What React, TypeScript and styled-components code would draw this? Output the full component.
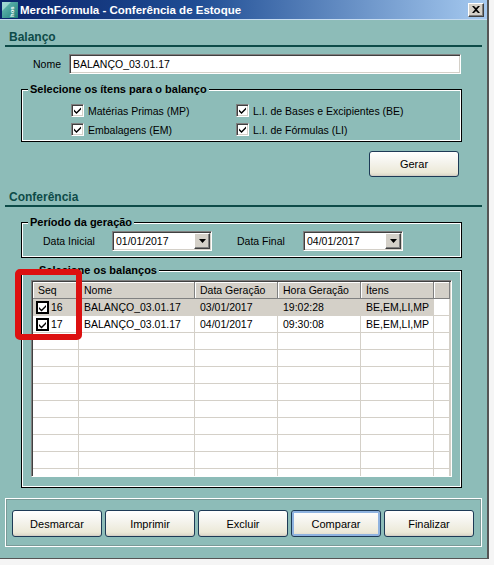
import React from 'react';
import styled, { createGlobalStyle } from 'styled-components';

const TEAL = '#8dbcb8';
const DARK_TEAL = '#0d4b48';

const GlobalStyle = createGlobalStyle`
  html, body { margin: 0; padding: 0; background: #f5f5f5; }
  body {
    font-family: "Liberation Sans", Arial, sans-serif;
    font-size: 10.5px;
    color: #000;
  }
  * { box-sizing: border-box; }
`;

const Window = styled.div`
  width: 489px;
  height: 559px;
  background: ${TEAL};
  border-right: 2px solid #555;
  border-bottom: 1px solid #555;
  display: flex;
  flex-direction: column;
`;

const TitleBar = styled.div`
  height: 20px;
  flex: none;
  display: flex;
  align-items: center;
  gap: 2px;
  padding: 0 3px 0 2px;
  background: linear-gradient(to right, #0a246a 0%, #1f4d94 40%, #a6caf0 100%);
  color: #fff;
  font-weight: bold;
  font-size: 11.5px;
  border-bottom: 1px solid #c6dcf0;
`;

const TitleText = styled.span`
  flex: 1;
  white-space: nowrap;
`;

const CloseButton = styled.span`
  width: 16px;
  height: 14px;
  background: #d4d0c8;
  border: 1px solid;
  border-color: #fff #404040 #404040 #fff;
  box-shadow: inset -1px -1px 0 #808080;
  display: flex;
  align-items: center;
  justify-content: center;
`;

const Body = styled.div`
  flex: 1;
  padding: 0 5px;
  display: flex;
  flex-direction: column;
`;

const SectionTitle = styled.div<{ $pt: number }>`
  padding: ${(p) => p.$pt}px 0 0 4px;
  line-height: 16px;
  font-size: 12px;
  font-weight: bold;
  color: ${DARK_TEAL};
  border-bottom: 2px solid ${DARK_TEAL};
`;

const NomeRow = styled.div`
  display: flex;
  align-items: center;
  margin-top: 7px;
  padding-left: 28px;
`;

const FieldLabel = styled.span<{ $w: number }>`
  width: ${(p) => p.$w}px;
  flex: none;
  white-space: nowrap;
`;

const Sunken = styled.div`
  background: #fff;
  border: 1px solid;
  border-color: #808080 #fff #fff #808080;
  box-shadow: inset 1px 1px 0 #404040, inset -1px -1px 0 #d4d0c8;
`;

const TextInput = styled(Sunken)`
  width: 392px;
  height: 20px;
  padding: 0 3px;
  line-height: 18px;
`;

const Group = styled.fieldset<{ $mt: number; $pad: string }>`
  margin: ${(p) => p.$mt}px 0 0 16px;
  width: 441px;
  min-width: 0;
  padding: ${(p) => p.$pad};
  border: 1px solid #000;
  box-shadow: inset 0 0 0 1px #fff;
`;

const Legend = styled.legend`
  margin-left: 6px;
  padding: 0 2px;
  line-height: 14px;
  font-size: 11px;
  font-weight: bold;
  background: ${TEAL};
`;

const CheckGrid = styled.div`
  display: grid;
  grid-template-columns: 165px 165px;
  grid-auto-rows: 19px;
  padding-left: 49px;
`;

const CheckItem = styled.label`
  display: flex;
  align-items: center;
  gap: 4px;
  white-space: nowrap;
`;

const CheckBox = styled(Sunken)`
  width: 13px;
  height: 13px;
  flex: none;
  display: flex;
  align-items: center;
  justify-content: center;
`;

const ButtonRow = styled.div`
  margin: 9px 0 0 16px;
  width: 441px;
  display: flex;
  justify-content: flex-end;
  padding-right: 3px;
`;

const Button = styled.div<{ $h: number; $focused?: boolean }>`
  width: 90px;
  height: ${(p) => p.$h}px;
  display: flex;
  align-items: center;
  justify-content: center;
  border: 1px solid #1d3a56;
  border-radius: 3px;
  background: linear-gradient(#ffffff 0%, #f5f4ee 40%, #ece9d8 85%, #d9d5c8 100%);
  box-shadow: ${(p) =>
    p.$focused ? 'inset 0 0 0 2px #8fb3e0' : 'inset 0 -1px 0 #d6d0c5'};
  font-size: 11px;
`;

const DateRow = styled.div`
  display: flex;
  align-items: center;
  padding-left: 21px;
`;

const Combo = styled(Sunken)`
  width: 100px;
  height: 20px;
  display: flex;
  align-items: center;
  padding: 0 1px 0 3px;
  margin-right: 25px;
`;

const ComboText = styled.span`
  flex: 1;
`;

const DropButton = styled.span`
  width: 16px;
  height: 16px;
  background: #d4d0c8;
  border: 1px solid;
  border-color: #fff #404040 #404040 #fff;
  box-shadow: inset -1px -1px 0 #808080;
  display: flex;
  align-items: center;
  justify-content: center;
`;

const GridWrap = styled.div`
  position: relative;
`;

const Grid = styled.div`
  width: 421px;
  height: 197px;
  background: #fff;
  border: 1px solid;
  border-color: #808080 #fff #fff #808080;
  box-shadow: inset 1px 1px 0 #404040, inset -1px -1px 0 #d4d0c8;
  padding: 1px;
  overflow: hidden;
`;

const COLS = '46px 116px 83px 83px 73px 16px';

const GridRow = styled.div`
  display: grid;
  grid-template-columns: ${COLS};
  height: 17px;
`;

const HeadCell = styled.div`
  background: #d4d0c8;
  border-right: 1px solid #808080;
  border-bottom: 1px solid #808080;
  box-shadow: inset 1px 1px 0 #fff;
  padding-left: 5px;
  line-height: 16px;
  white-space: nowrap;
  overflow: hidden;
`;

const Cell = styled.div<{ $selected?: boolean }>`
  background: ${(p) => (p.$selected ? '#d4d0c8' : '#fff')};
  border-right: 1px solid #d4d0c8;
  border-bottom: 1px solid #d4d0c8;
  padding-left: 5px;
  line-height: 16px;
  white-space: nowrap;
  overflow: hidden;
  display: flex;
  align-items: center;
`;

const SeqCell = styled(Cell)`
  padding-left: 3px;
  gap: 2px;
`;

const Highlight = styled.div`
  position: absolute;
  left: -16px;
  top: -11px;
  width: 67px;
  height: 71px;
  border: 6px solid #dc1010;
  border-radius: 5px;
  pointer-events: none;
`;

const BottomPanel = styled.div`
  margin-top: 10px;
  height: 49px;
  border: 1px solid #fff;
  outline: 1px solid #7a9a97;
  outline-offset: -2px;
  display: flex;
  gap: 3px;
  padding: 11px 0 0 6px;
`;

const Check = () => (
  <svg width="9" height="9" viewBox="0 0 9 9">
    <path d="M1 3.5 L3.5 6 L8 1.5 L8 3.5 L3.5 8 L1 5.5 Z" fill="#000" />
  </svg>
);

const GridCheck = () => (
  <svg width="13" height="13" viewBox="0 0 13 13">
    <rect x="1" y="1" width="11" height="11" fill="#fff" stroke="#000" strokeWidth="2" />
    <path d="M3 6 L5.5 8.5 L10 4 L10 6 L5.5 10.5 L3 8 Z" fill="#000" />
  </svg>
);

const Arrow = () => (
  <svg width="7" height="4" viewBox="0 0 7 4">
    <path d="M0 0 H7 L3.5 4 Z" fill="#000" />
  </svg>
);

const AppIcon = () => (
  <svg width="16" height="16" viewBox="0 0 16 16">
    <defs>
      <linearGradient id="ic" x1="0" y1="0" x2="1" y2="1">
        <stop offset="0" stopColor="#6fc1b9" />
        <stop offset="1" stopColor="#1f7f7a" />
      </linearGradient>
    </defs>
    <rect x="0" y="0" width="16" height="16" fill="url(#ic)" />
    <path d="M0 0 L9 0 L0 9 Z" fill="#b7e3de" opacity="0.7" />
    <text
      x="12"
      y="15"
      fontSize="6"
      fill="#fff"
      fontFamily="Liberation Sans, sans-serif"
      transform="rotate(-90 12 15)"
    >
      hos
    </text>
  </svg>
);

const CloseX = () => (
  <svg width="8" height="7" viewBox="0 0 8 7">
    <path d="M0 0 L2 0 L4 2 L6 0 L8 0 L5 3.5 L8 7 L6 7 L4 5 L2 7 L0 7 L3 3.5 Z" fill="#000" />
  </svg>
);

const items = [
  'Matérias Primas (MP)',
  'L.I. de Bases e Excipientes (BE)',
  'Embalagens (EM)',
  'L.I. de Fórmulas (LI)',
];

const headers = ['Seq', 'Nome', 'Data Geração', 'Hora Geração', 'Ítens', ''];

const balancos = [
  { seq: '16', nome: 'BALANÇO_03.01.17', data: '03/01/2017', hora: '19:02:28', itens: 'BE,EM,LI,MP' },
  { seq: '17', nome: 'BALANÇO_03.01.17', data: '04/01/2017', hora: '09:30:08', itens: 'BE,EM,LI,MP' },
];

const emptyRows = Array.from({ length: 10 });

const actions = ['Desmarcar', 'Imprimir', 'Excluir', 'Comparar', 'Finalizar'];

export default function App() {
  return (
    <>
      <GlobalStyle />
      <Window>
        <TitleBar>
          <AppIcon />
          <TitleText>MerchFórmula - Conferência de Estoque</TitleText>
          <CloseButton>
            <CloseX />
          </CloseButton>
        </TitleBar>
        <Body>
          <SectionTitle $pt={9}>Balanço</SectionTitle>
          <NomeRow>
            <FieldLabel $w={36}>Nome</FieldLabel>
            <TextInput>BALANÇO_03.01.17</TextInput>
          </NomeRow>

          <Group $mt={8} $pad="5px 0 2px 0">
            <Legend>Selecione os ítens para o balanço</Legend>
            <CheckGrid>
              {items.map((label) => (
                <CheckItem key={label}>
                  <CheckBox>
                    <Check />
                  </CheckBox>
                  {label}
                </CheckItem>
              ))}
            </CheckGrid>
          </Group>

          <ButtonRow>
            <Button $h={26}>Gerar</Button>
          </ButtonRow>

          <SectionTitle $pt={12}>Conferência</SectionTitle>

          <Group $mt={8} $pad="2px 0 6px 0">
            <Legend>Período da geração</Legend>
            <DateRow>
              <FieldLabel $w={69}>Data Inicial</FieldLabel>
              <Combo>
                <ComboText>01/01/2017</ComboText>
                <DropButton>
                  <Arrow />
                </DropButton>
              </Combo>
              <FieldLabel $w={66}>Data Final</FieldLabel>
              <Combo>
                <ComboText>04/01/2017</ComboText>
                <DropButton>
                  <Arrow />
                </DropButton>
              </Combo>
            </DateRow>
          </Group>

          <Group $mt={5} $pad="3px 8px 10px 9px">
            <Legend>Selecione os balanços</Legend>
            <GridWrap>
              <Grid>
                <GridRow>
                  {headers.map((h, i) => (
                    <HeadCell key={i}>{h}</HeadCell>
                  ))}
                </GridRow>
                {balancos.map((b, i) => {
                  const sel = i === 0;
                  return (
                    <GridRow key={b.seq}>
                      <SeqCell $selected={sel}>
                        <GridCheck />
                        {b.seq}
                      </SeqCell>
                      <Cell $selected={sel}>{b.nome}</Cell>
                      <Cell $selected={sel}>{b.data}</Cell>
                      <Cell $selected={sel}>{b.hora}</Cell>
                      <Cell $selected={sel}>{b.itens}</Cell>
                      <Cell />
                    </GridRow>
                  );
                })}
                {emptyRows.map((_, i) => (
                  <GridRow key={`e${i}`}>
                    {headers.map((_h, j) => (
                      <Cell key={j} />
                    ))}
                  </GridRow>
                ))}
              </Grid>
              <Highlight />
            </GridWrap>
          </Group>

          <BottomPanel>
            {actions.map((a) => (
              <Button key={a} $h={27} $focused={a === 'Comparar'}>
                {a}
              </Button>
            ))}
          </BottomPanel>
        </Body>
      </Window>
    </>
  );
}
